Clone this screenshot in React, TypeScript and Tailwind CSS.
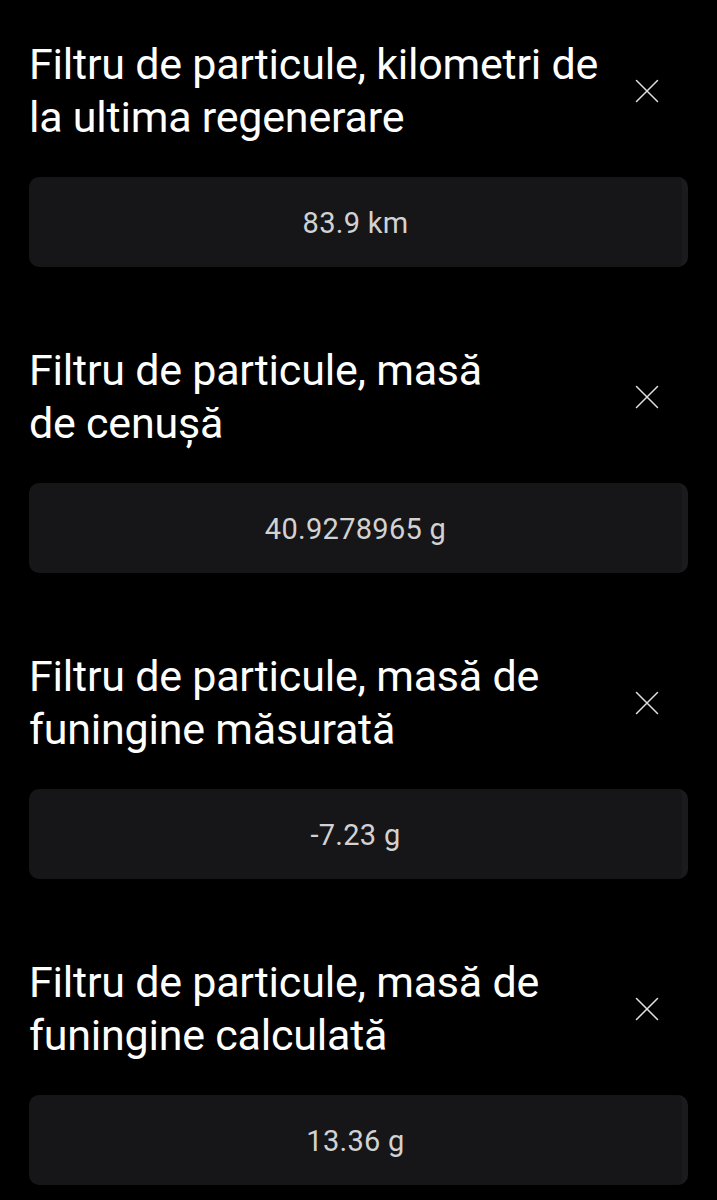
import React from 'react';

const items = [
  { title: ['Filtru de particule, kilometri de', 'la ultima regenerare'], value: '83.9 km' },
  { title: ['Filtru de particule, masă', 'de cenușă'], value: '40.9278965 g' },
  { title: ['Filtru de particule, masă de', 'funingine măsurată'], value: '-7.23 g' },
  { title: ['Filtru de particule, masă de', 'funingine calculată'], value: '13.36 g' },
];

const CloseIcon = () => (
  <svg width="24" height="24" viewBox="0 0 24 24" fill="none" stroke="#e0e0e0" strokeWidth="1.5" strokeLinecap="round">
    <path d="M1.5 1.5L22.5 22.5M22.5 1.5L1.5 22.5" />
  </svg>
);

const App = () => {
  return (
    <div className="min-h-[1200px] bg-black px-[29px] pt-[38px] font-['Roboto',sans-serif]">
      {items.map((it, i) => (
        <div key={i} className="mb-[77px]">
          <div className="flex items-center justify-between">
            <h2 className="text-[43px] leading-[53px] tracking-[-0.005em] text-white font-normal">
              {it.title[0]}
              <br />
              {it.title[1]}
            </h2>
            <button className="mr-[29px] p-0">
              <CloseIcon />
            </button>
          </div>
          <div className="mt-[33px] h-[90px] rounded-[10px] bg-[#161618] border-r-[6px] border-[#1b1b1d] flex items-center justify-center">
            <span className="text-[29px] tracking-[0.01em] text-[#d2d2d2] pt-[3px]">{it.value}</span>
          </div>
        </div>
      ))}
    </div>
  );
};

export default App;
